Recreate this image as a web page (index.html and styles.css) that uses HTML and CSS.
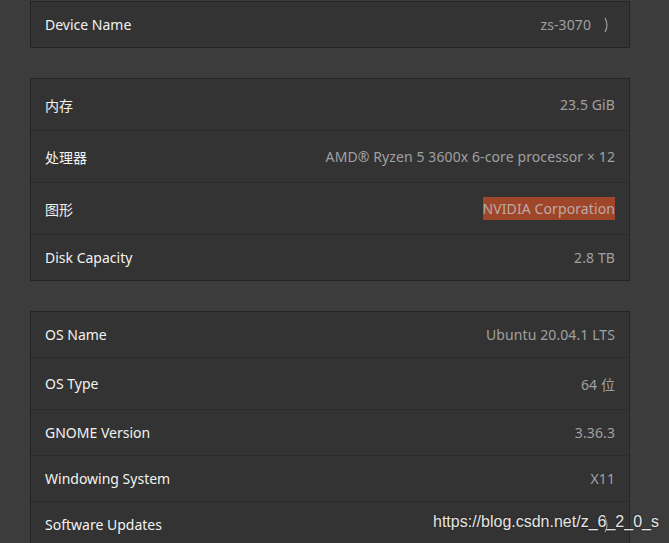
FILE: index.html
```html
<!DOCTYPE html>
<html lang="zh">
<head>
<meta charset="utf-8">
<title>About</title>
<link rel="stylesheet" href="styles.css">
</head>
<body>
<main class="page">
  <section class="card">
    <div class="row">
      <span class="label">Device Name</span>
      <span class="value">zs-3070</span>
      <svg class="chevron" viewBox="0 0 16 16" width="16" height="16"><path d="M6 1 Q10 8 6 15" /></svg>
    </div>
  </section>

  <section class="card">
    <div class="row row-tall">
      <span class="label">内存</span>
      <span class="value">23.5 GiB</span>
    </div>
    <div class="row row-tall">
      <span class="label">处理器</span>
      <span class="value">AMD® Ryzen 5 3600x 6-core processor × 12</span>
    </div>
    <div class="row row-tall">
      <span class="label">图形</span>
      <span class="value"><mark class="selected">NVIDIA Corporation</mark></span>
    </div>
    <div class="row">
      <span class="label">Disk Capacity</span>
      <span class="value">2.8 TB</span>
    </div>
  </section>

  <section class="card">
    <div class="row">
      <span class="label">OS Name</span>
      <span class="value">Ubuntu 20.04.1 LTS</span>
    </div>
    <div class="row row-tall">
      <span class="label">OS Type</span>
      <span class="value">64 位</span>
    </div>
    <div class="row">
      <span class="label">GNOME Version</span>
      <span class="value">3.36.3</span>
    </div>
    <div class="row">
      <span class="label">Windowing System</span>
      <span class="value">X11</span>
    </div>
    <div class="row">
      <span class="label">Software Updates</span>
      <span class="value"></span>
      <svg class="chevron" viewBox="0 0 16 16" width="16" height="16"><path d="M6 1 Q10 8 6 15" /></svg>
    </div>
  </section>

  <div class="watermark">https://blog.csdn.net/z_6_2_0_s</div>
</main>
</body>
</html>
```

FILE: styles.css
```css
html, body {
  margin: 0;
  padding: 0;
  height: 100%;
  overflow: hidden;
  background: #3c3c3c;
}

.page {
  position: relative;
  display: flex;
  flex-direction: column;
  gap: 30px;
  padding: 1px 39px 0 30px;
  font-family: "Noto Sans", "Noto Sans CJK SC", sans-serif;
  font-size: 14px;
}

.card {
  background: #333333;
  border: 1px solid #252525;
  display: flex;
  flex-direction: column;
}

.row {
  display: flex;
  align-items: center;
  min-height: 45px;
  padding: 0 14px;
  gap: 12px;
}

.row + .row {
  border-top: 1px solid #2c2c2c;
}

.row-tall {
  min-height: 51px;
}

.label {
  color: #f2f2f0;
  flex: 1;
  white-space: nowrap;
}

.value {
  color: #a0a0a0;
  white-space: nowrap;
  letter-spacing: 0.1px;
}

.selected {
  background: #9f4529;
  color: #b9aca6;
  padding: 2px 0;
}

.chevron {
  flex: none;
  margin-left: -4px;
}

.chevron path {
  fill: none;
  stroke: #a0a0a0;
  stroke-width: 1.2;
}

.watermark {
  position: absolute;
  left: 433px;
  top: 513px;
  font-family: "Liberation Sans", Arial, sans-serif;
  font-size: 16px;
  color: #e6e6e6;
  text-shadow: 0 0 2px rgba(0, 0, 0, 0.6);
  white-space: nowrap;
}
```
